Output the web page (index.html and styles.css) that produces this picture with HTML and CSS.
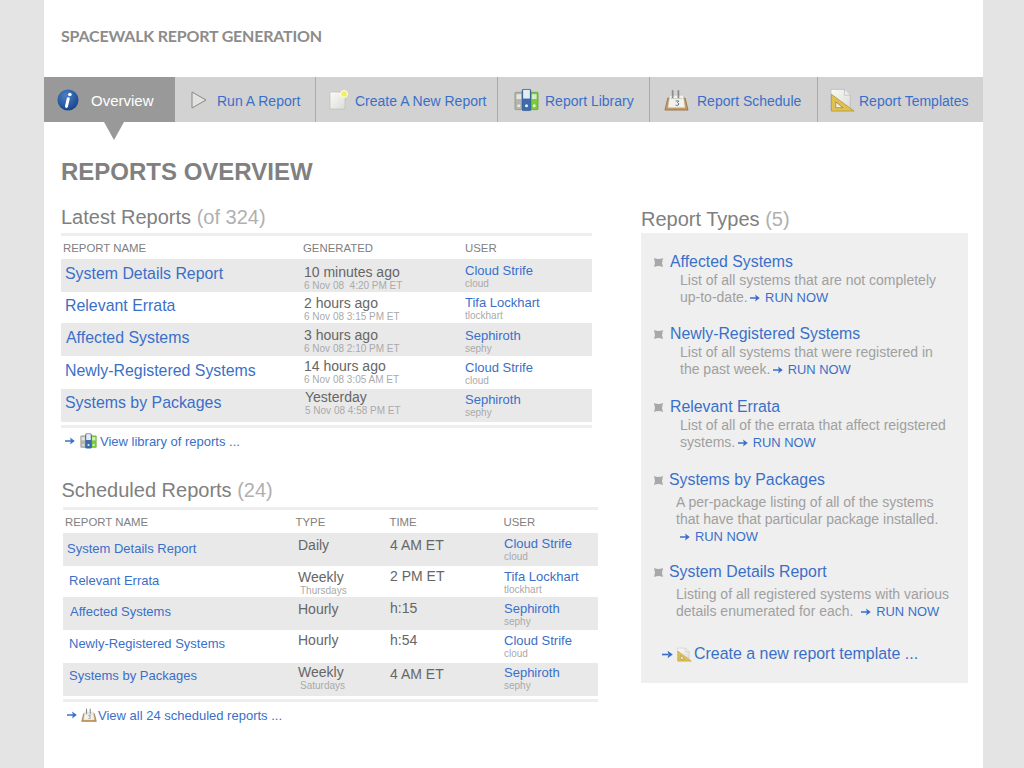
FILE: index.html
```html
<!DOCTYPE html>
<html lang="en">
<head>
<meta charset="utf-8">
<title>Spacewalk Report Generation</title>
<link rel="stylesheet" href="styles.css">
</head>
<body>
<svg class="defs" width="0" height="0" aria-hidden="true">
  <defs>
    <linearGradient id="pg" x1="0" y1="0" x2="1" y2="1"><stop offset="0" stop-color="#fafaf8"/><stop offset="1" stop-color="#dcdcd8"/></linearGradient>
    <radialGradient id="ib" cx=".4" cy=".3" r=".8"><stop offset="0" stop-color="#4c7fc4"/><stop offset="1" stop-color="#123f85"/></radialGradient>
    <symbol id="i-lib" viewBox="0 0 26 24">
      <rect x="1" y="4" width="8" height="18" rx="1" fill="#b4b6ae" stroke="#7d7f78" stroke-width=".6"/>
      <rect x="17" y="4" width="8" height="18" rx="1" fill="#7ccb3c" stroke="#4d9420" stroke-width=".6"/>
      <rect x="8.500" y="1" width="9" height="22" rx="1" fill="#3c6cae" stroke="#234b85" stroke-width=".6"/>
      <rect x="9.500" y="1.500" width="7" height="9" fill="#e6ebf0"/>
      <rect x="2.500" y="6" width="5" height="5" fill="#e4e4e0"/><rect x="18.500" y="6" width="5" height="5" fill="#d6eec4"/>
      <circle cx="5" cy="18" r="1.600" fill="#e8e8e8"/><circle cx="13" cy="18" r="1.600" fill="#e8eef8"/><circle cx="21" cy="18" r="1.600" fill="#e8f8e0"/>
    </symbol>
    <symbol id="i-cal" viewBox="0 0 26 24">
      <path d="M4 10h18l3 12.500H1z" fill="#c49a62" stroke="#8a6230" stroke-width=".7"/>
      <path d="M6 7h14l2 13H4z" fill="#f2f2ee" stroke="#b4b4ae" stroke-width=".4"/>
      <path d="M9 10V2.500M15 10V2.500" stroke="#8d8d88" stroke-width="1.800" fill="none" stroke-linecap="round"/>
      <path d="M7 10.500h12" stroke="#ccc" stroke-width="1"/>
      <path d="M12 13h3.500l-1.500 1.800 1.500 1.200-.8 1.500h-2.700" stroke="#666" stroke-width=".9" fill="none"/>
    </symbol>
    <symbol id="i-tpl" viewBox="0 0 26 24">
      <path d="M1 1h14l6 6v15H1z" fill="url(#pg)" stroke="#b0b0b0" stroke-width=".6"/>
      <path d="M15 1v6h6" fill="#eee" stroke="#b0b0b0" stroke-width=".6"/>
      <path d="M1.500 6l23.500 17.500H1.500z" fill="#e0c052" stroke="#a98d2c" stroke-width=".7"/>
      <path d="M6 14l7.500 6H6z" fill="#f1f0e2" stroke="#8f7a2c" stroke-width=".7"/>
    </symbol>
    <symbol id="i-arrow" viewBox="0 0 10 8">
      <path d="M0 4h6" fill="none" stroke="#3a6fc9" stroke-width="1.500"/>
      <path d="M5 .6L9.800 4 5 7.400 6 4z" fill="#3a6fc9"/>
    </symbol>
    <symbol id="i-bullet" viewBox="0 0 10 10">
      <path d="M0 0Q5 2 10 0Q8 5 10 10Q5 8 0 10Q2 5 0 0z" fill="#a8a8a8"/>
    </symbol>
  </defs>
</svg>
<div class="page">
  <header class="brand">SPACEWALK REPORT GENERATION</header>
  <nav class="tabs">
    <a class="tab tab-active tab-overview">
      <svg class="ic-info" viewBox="0 0 24 24"><circle cx="12" cy="12" r="11.500" fill="url(#ib)"/><circle cx="14" cy="6" r="2" fill="#fff"/><path d="M12.300 10.500l-2 8.500" stroke="#fff" stroke-width="3.200" stroke-linecap="round"/></svg>
      <span>Overview</span>
    </a>
    <a class="tab tab-run">
      <svg class="ic-run" viewBox="0 0 16 18"><path d="M1 1L15 9 1 17z" fill="#e2e2e0" stroke="#888" stroke-width="1"/></svg>
      <span>Run A Report</span>
    </a>
    <a class="tab tab-create">
      <svg class="ic-new" viewBox="0 0 20 20"><path d="M1 2h15v17H1z" fill="url(#pg)" stroke="#bbb" stroke-width=".6"/><circle cx="15" cy="4" r="3.500" fill="#f4ee5e" stroke="#fff" stroke-width="1"/></svg>
      <span>Create A New Report</span>
    </a>
    <a class="tab tab-lib"><svg class="ic-big"><use href="#i-lib"/></svg><span>Report Library</span></a>
    <a class="tab tab-sched"><svg class="ic-big"><use href="#i-cal"/></svg><span>Report Schedule</span></a>
    <a class="tab tab-tpl"><svg class="ic-big"><use href="#i-tpl"/></svg><span>Report Templates</span></a>
  </nav>
  <div class="pointer"></div>
  <h1 class="title">REPORTS OVERVIEW</h1>
  <main class="columns">
    <div class="left">
      <section class="latest">
        <h2 class="heading">Latest Reports <span class="count">(of 324)</span></h2>
        <div class="table t-latest">
          <div class="row head"><span>REPORT NAME</span><span>GENERATED</span><span>USER</span></div>
          <div class="row shade r33"><a class="name big p1">System Details Report</a><div class="when p5"><div>10 minutes ago</div><small>6 Nov 08 &nbsp;4:20 PM ET</small></div><div class="who p4"><a>Cloud Strife</a><small>cloud</small></div></div>
          <div class="row r31"><a class="name big p0">Relevant Errata</a><div class="when p3"><div>2 hours ago</div><small>6 Nov 08 3:15 PM ET</small></div><div class="who p3"><a>Tifa Lockhart</a><small>tlockhart</small></div></div>
          <div class="row shade r33"><a class="name big p1 in1">Affected Systems</a><div class="when p4"><div>3 hours ago</div><small>6 Nov 08 2:10 PM ET</small></div><div class="who p5"><a>Sephiroth</a><small>sephy</small></div></div>
          <div class="row r33"><a class="name big p1">Newly-Registered Systems</a><div class="when p2"><div>14 hours ago</div><small>6 Nov 08 3:05 AM ET</small></div><div class="who p4"><a>Cloud Strife</a><small>cloud</small></div></div>
          <div class="row shade r33"><a class="name big p0">Systems by Packages</a><div class="when p0 in1"><div>Yesterday</div><small>5 Nov 08 4:58 PM ET</small></div><div class="who p3"><a>Sephiroth</a><small>sephy</small></div></div>
        </div>
        <a class="more more-lib"><svg class="arrow"><use href="#i-arrow"/></svg><svg class="ic-small"><use href="#i-lib"/></svg>View library of reports ...</a>
      </section>
      <section class="scheduled">
        <h2 class="heading">Scheduled Reports <span class="count">(24)</span></h2>
        <div class="table t-sched">
          <div class="row head"><span>REPORT NAME</span><span>TYPE</span><span>TIME</span><span>USER</span></div>
          <div class="row shade r33"><a class="name p4">System Details Report</a><div class="when p4"><div>Daily</div></div><div class="when p4"><div>4 AM ET</div></div><div class="who p3"><a>Cloud Strife</a><small>cloud</small></div></div>
          <div class="row r31"><a class="name p3 in2">Relevant Errata</a><div class="when p3"><div>Weekly</div><small class="in2">Thursdays</small></div><div class="when p2"><div>2 PM ET</div></div><div class="who p3"><a>Tifa Lockhart</a><small>tlockhart</small></div></div>
          <div class="row shade r33"><a class="name p3 in3">Affected Systems</a><div class="when p4"><div>Hourly</div></div><div class="when p3"><div>h:15</div></div><div class="who p4"><a>Sephiroth</a><small>sephy</small></div></div>
          <div class="row r33"><a class="name p2 in2">Newly-Registered Systems</a><div class="when p2"><div>Hourly</div></div><div class="when p2"><div>h:54</div></div><div class="who p3"><a>Cloud Strife</a><small>cloud</small></div></div>
          <div class="row shade r33"><a class="name p1 in2">Systems by Packages</a><div class="when p1"><div>Weekly</div><small class="in2">Saturdays</small></div><div class="when p3"><div>4 AM ET</div></div><div class="who p2"><a>Sephiroth</a><small>sephy</small></div></div>
        </div>
        <a class="more more-sched"><svg class="arrow"><use href="#i-arrow"/></svg><svg class="ic-small"><use href="#i-cal"/></svg>View all 24 scheduled reports ...</a>
      </section>
    </div>
    <aside class="right">
      <h2 class="heading">Report Types <span class="count">(5)</span></h2>
      <div class="panel">
        <div class="type"><div class="type-title"><svg class="bullet"><use href="#i-bullet"/></svg><a>Affected Systems</a></div><p>List of all systems that are not completely<br>up-to-date. <a class="run"><svg class="arrow"><use href="#i-arrow"/></svg>RUN NOW</a></p></div>
        <div class="type"><div class="type-title"><svg class="bullet"><use href="#i-bullet"/></svg><a>Newly-Registered Systems</a></div><p>List of all systems that were registered in<br>the past week. <a class="run"><svg class="arrow"><use href="#i-arrow"/></svg>RUN NOW</a></p></div>
        <div class="type"><div class="type-title"><svg class="bullet"><use href="#i-bullet"/></svg><a>Relevant Errata</a></div><p>List of all of the errata that affect reigstered<br>systems. <a class="run"><svg class="arrow"><use href="#i-arrow"/></svg>RUN NOW</a></p></div>
        <div class="type"><div class="type-title"><svg class="bullet"><use href="#i-bullet"/></svg><a>Systems by Packages</a></div><p>A per-package listing of all of the systems<br>that have that particular package installed.<br><a class="run run-own"><svg class="arrow"><use href="#i-arrow"/></svg>RUN NOW</a></p></div>
        <div class="type"><div class="type-title"><svg class="bullet"><use href="#i-bullet"/></svg><a>System Details Report</a></div><p>Listing of all registered systems with various<br>details enumerated for each. &nbsp;<a class="run run-wide"><svg class="arrow"><use href="#i-arrow"/></svg>RUN NOW</a></p></div>
        <a class="create"><svg class="arrow"><use href="#i-arrow"/></svg><svg class="ic-small"><use href="#i-tpl"/></svg>Create a new report template ...</a>
      </div>
    </aside>
  </main>
</div>
</body>
</html>
```
FILE: styles.css
```css
* { box-sizing: border-box; }
html, body { margin: 0; height: 100%; }
body { background: #e4e4e4; font-family: "Liberation Sans", Arial, sans-serif; color: #666; overflow: hidden; }
.defs { position: absolute; }
a { color: #3a6fc9; text-decoration: none; }
.page { margin-left: 44px; width: 939px; height: 768px; background: #fff; }
.brand { height: 77px; padding: 27px 0 0 17px; font-family: Lato, sans-serif; font-weight: 700; font-size: 16px; line-height: 18px; color: #8c8c8c; letter-spacing: -.2px; }

.tabs { display: flex; height: 45px; background: #d2d2d2; font-size: 14px; }
.tab { display: flex; align-items: center; border-right: 1px solid #aaa; flex: none; }
.tab span { padding-top: 2px; }
.tab:last-child { border-right: 0; }
.tab-active { background: #999; color: #fff; border-right: 0; font-size: 15px; }
.tab-overview { width: 131px; padding-left: 13px; gap: 12px; }
.tab-run { width: 141px; padding-left: 16px; gap: 10px; }
.tab-create { width: 182px; padding-left: 13px; gap: 6px; }
.tab-lib { width: 152px; padding-left: 16px; gap: 6px; }
.tab-sched { width: 168px; padding-left: 14px; gap: 8px; }
.tab-tpl { width: 165px; padding-left: 12px; gap: 4px; }
.ic-info { width: 22px; height: 22px; }
.ic-run { width: 16px; height: 18px; }
.ic-new { width: 20px; height: 20px; }
.ic-big { width: 25px; height: 24px; }
.pointer { width: 0; height: 0; margin-left: 60px; border-left: 10.500px solid transparent; border-right: 10.500px solid transparent; border-top: 18px solid #999; }

.title { margin: 18px 0 0 17px; font-size: 24px; line-height: 28px; font-weight: 700; color: #808080; }
.columns { display: flex; margin-top: 18px; }
.left { width: 597px; padding-left: 17px; flex: none; }
.right { width: 327px; flex: none; margin-top: 2px; }
.heading { margin: 0; font-size: 20px; line-height: 26px; font-weight: 400; color: #808080; }
.count { color: #b0b0b0; }

.table { border-top: 3px solid #eee; border-bottom: 3px solid #eee; margin-top: 3px; padding-bottom: 3px; }
.t-latest { width: 531px; }
.row { display: grid; align-items: start; }
.t-latest .row { grid-template-columns: 239px 161px 1fr; padding-left: 4px; }
.t-sched .row { grid-template-columns: 231px 92px 114px 1fr; padding-left: 4px; }
.row.head { height: 23px; font-size: 11.400px; line-height: 25px; color: #808080; padding-left: 2px; }
.t-latest .head { grid-template-columns: 240px 162px 1fr; }
.t-sched .head { grid-template-columns: 230.500px 94px 114px 1fr; }
.shade { background: #e9e9e9; }
.r33 { height: 33px; } .r31 { height: 31px; }
.p0 { padding-top: 0; } .p1 { padding-top: 1px; } .p2 { padding-top: 2px; } .p3 { padding-top: 3px; } .p4 { padding-top: 4px; } .p5 { padding-top: 5px; }
.in1 { margin-left: 1px; } .in2 { margin-left: 2px; } .in3 { margin-left: 3px; }
.name { font-size: 13px; line-height: 24px; }
.name.big { font-size: 15.900px; line-height: 28px; }
.when { font-size: 14px; line-height: 17px; color: #666; }
.when small { display: block; font-size: 10px; line-height: 9px; color: #aaa; }
.who { font-size: 13px; line-height: 16px; }
.who a { display: block; }
.who small { display: block; font-size: 10px; line-height: 9px; color: #aaa; }

.more { display: flex; align-items: center; font-size: 13px; margin-top: 5px; height: 16px; }
.arrow { width: 10px; height: 8px; margin-right: 5px; flex: none; }
.ic-small { width: 17px; height: 16px; flex: none; }
.more-lib { padding-left: 4px; }
.more-lib .ic-small { margin-right: 3px; }
.scheduled { margin-top: 28px; }
.scheduled .heading { margin-left: .5px; }
.t-sched { margin-top: 4px; margin-left: 2px; width: 535px; }
.more-sched { padding-left: 6px; }
.more-sched .arrow { margin-right: 4px; }
.more-sched .ic-small { width: 16px; margin-right: 1px; }

.panel { background: #efefef; height: 450px; margin-top: 1px; padding: 19px 13px 0; }
.type { margin-bottom: 18px; }
.type:nth-child(2), .type:nth-child(3) { margin-bottom: 19px; }
.type:nth-child(4) { margin-bottom: 17.500px; }
.type:nth-child(5) { margin-bottom: 24.500px; }
.type-title { display: flex; align-items: center; font-size: 15.850px; line-height: 20px; }
.bullet { width: 9px; height: 9px; margin-right: 7px; flex: none; }
.type:nth-child(n+4) .bullet { margin-right: 6px; }
.type p { margin: 0 0 0 26px; font-size: 14px; line-height: 17px; color: #a0a0a0; }
.type:nth-child(n+4) p { margin-left: 22px; margin-top: 3.500px; }
.run { font-size: 12.900px; margin-left: -1.500px; }
.run-own { margin-left: 4px; }
.run-wide { margin-left: 0; }
.create { display: flex; align-items: center; font-size: 15.950px; line-height: 20px; margin-left: 8px; }
.create .arrow { width: 11px; height: 9px; margin-right: 4px; }
.create .ic-small { width: 15px; height: 15px; margin-right: 2px; }
```
